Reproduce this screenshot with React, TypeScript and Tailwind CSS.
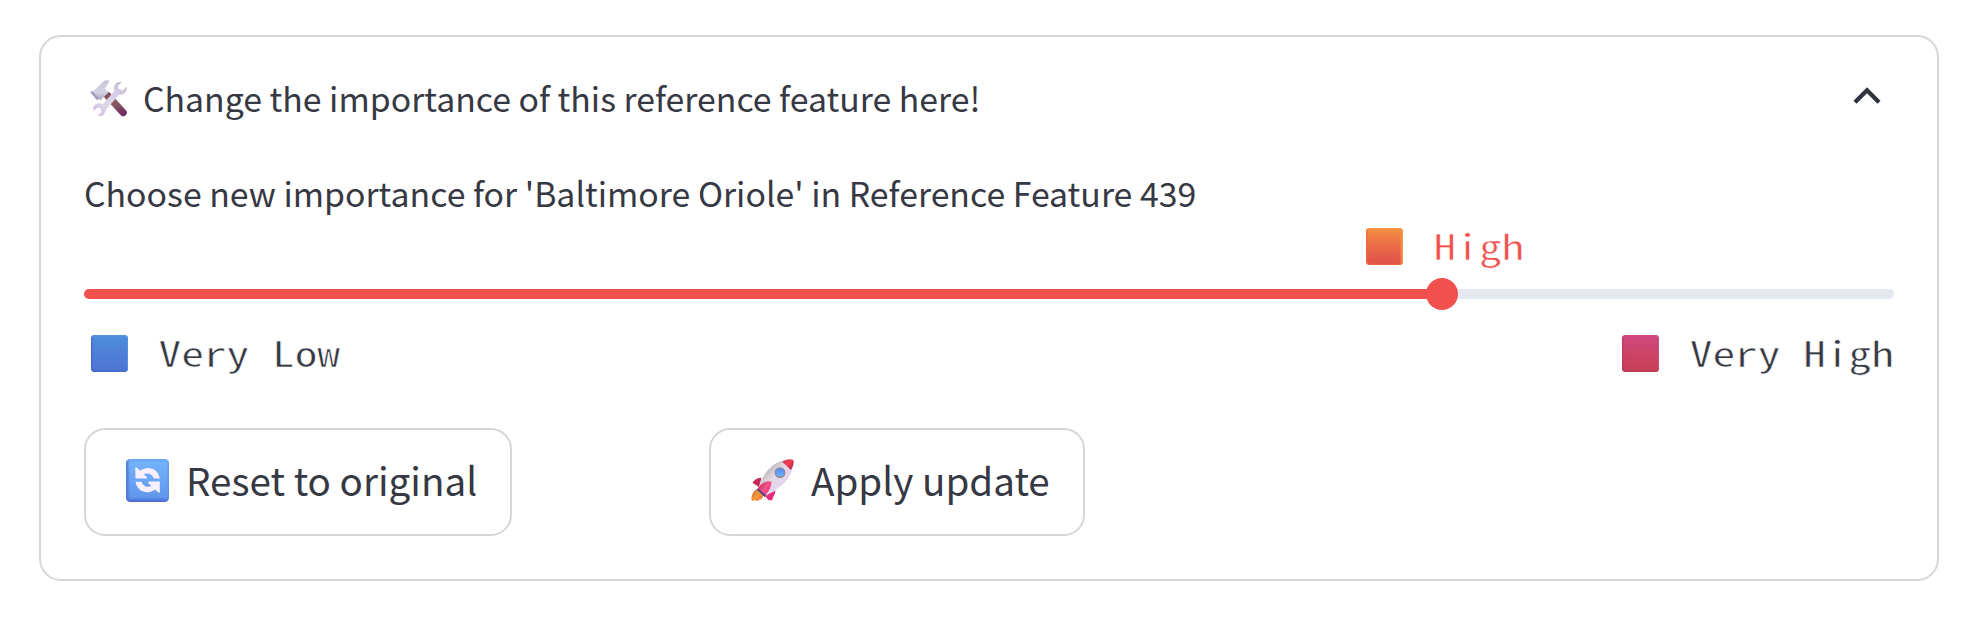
import type { ReactNode } from "react";

function ToolsIcon() {
  return (
    <svg className="h-[38px] w-[38px] shrink-0" viewBox="10 9 38 38" fill="none">
      <defs>
        <linearGradient id="handle" x1="26" y1="24" x2="42" y2="46" gradientUnits="userSpaceOnUse">
          <stop stopColor="#7d5055" />
          <stop offset="0.5" stopColor="#875a5c" />
          <stop offset="1" stopColor="#702a63" />
        </linearGradient>
        <linearGradient id="hammer" x1="20" y1="10" x2="22" y2="30" gradientUnits="userSpaceOnUse">
          <stop stopColor="#c9c6da" />
          <stop offset="0.6" stopColor="#d6d2e4" />
          <stop offset="1" stopColor="#aea6c6" />
        </linearGradient>
        <linearGradient id="wrench" x1="42" y1="12" x2="18" y2="46" gradientUnits="userSpaceOnUse">
          <stop stopColor="#bdb9c6" />
          <stop offset="0.3" stopColor="#d8ccea" />
          <stop offset="0.7" stopColor="#dcd8e4" />
          <stop offset="1" stopColor="#cdb4e6" />
        </linearGradient>
      </defs>
      <path d="M27.5 25.5L43.2 42.6" stroke="url(#handle)" strokeWidth="7.2" strokeLinecap="round" />
      <path d="M10.3 22.2L14.6 20.1L23.6 11.2Q24.6 10.2 26 10.2H29.6L28.2 13.4L24.9 18.8L28.5 22.5L20.3 30.6L17.8 28L17.2 30.3Z" fill="url(#hammer)" />
      <path d="M10.3 22.2L12.4 21.2L19.2 28.2L17.2 30.3Z" fill="#a49bbd" />
      <path d="M22.4 39.2L38.2 21.2" stroke="url(#wrench)" strokeWidth="6" />
      <path d="M41.8 12.3C37.4 10.9 33.3 14.4 34 19C34.3 23 38 25.5 41.8 24.5C45.4 23.6 47.3 20.4 46.7 16.9L42.7 20.4L38.2 18.8L38.1 15.5Z" fill="url(#wrench)" />
      <path d="M13.3 37.6C14.3 34.3 17.7 32.4 21 33.5C25.5 34.9 26.9 39.4 24.8 42.9C23.4 45.4 20.6 46.4 17.8 45.7L21.9 42L20.1 37.8L16.8 37.9L13.6 41.1Z" fill="url(#wrench)" />
    </svg>
  );
}

function RefreshIcon() {
  return (
    <svg className="h-[43px] w-[43px] shrink-0" viewBox="11 9 43 43" fill="none">
      <defs>
        <linearGradient id="tile" x1="32" y1="9" x2="32" y2="52" gradientUnits="userSpaceOnUse">
          <stop stopColor="#64a7f6" />
          <stop offset="0.1" stopColor="#73b1fb" />
          <stop offset="0.88" stopColor="#6298ec" />
          <stop offset="1" stopColor="#4965cf" />
        </linearGradient>
        <linearGradient id="tile-side" x1="11" y1="30" x2="54" y2="30" gradientUnits="userSpaceOnUse">
          <stop stopColor="#4766ca" stopOpacity="0.8" />
          <stop offset="0.1" stopColor="#4766ca" stopOpacity="0" />
          <stop offset="0.92" stopColor="#5ba8f6" stopOpacity="0" />
          <stop offset="1" stopColor="#4980e0" stopOpacity="0.5" />
        </linearGradient>
      </defs>
      <rect x="11" y="9" width="43" height="43" rx="4.5" fill="url(#tile)" />
      <rect x="11" y="9" width="43" height="43" rx="4.5" fill="url(#tile-side)" />
      <path d="M20.3 18.1Q20.5 16.8 21.7 17.6L25.1 20.7C33.2 14.7 43.2 18.8 44.8 28.4H38.8C37.2 23.7 32.8 22.4 28.8 24.2L32 27.2Q32.8 28.4 31.3 28.6H20.5Z" fill="#f8efff" />
      <path d="M44.8 42.1Q44.6 43.4 43.4 42.6L40.1 39.5C32 45.5 22.2 41.4 20.5 31.8H26.5C28.1 36.5 32.5 37.8 36.5 36L33.2 33Q32.5 31.8 34 31.6H44.8Z" fill="#f8efff" />
    </svg>
  );
}

function RocketIcon() {
  return (
    <svg className="h-[43px] w-[43px] shrink-0" viewBox="11.3 9.3 43 43" fill="none">
      <defs>
        <linearGradient id="hull" x1="27" y1="19" x2="43" y2="35" gradientUnits="userSpaceOnUse">
          <stop stopColor="#bdb5b9" />
          <stop offset="0.45" stopColor="#e2dae2" />
          <stop offset="1" stopColor="#e5d3f0" />
        </linearGradient>
        <linearGradient id="nose" x1="43" y1="10" x2="53" y2="18" gradientUnits="userSpaceOnUse">
          <stop stopColor="#d72f51" />
          <stop offset="0.55" stopColor="#f04052" />
          <stop offset="1" stopColor="#bb2848" />
        </linearGradient>
        <linearGradient id="fin" x1="18" y1="34" x2="32" y2="44" gradientUnits="userSpaceOnUse">
          <stop stopColor="#c52758" />
          <stop offset="0.5" stopColor="#f45588" />
          <stop offset="1" stopColor="#e9297b" />
        </linearGradient>
        <linearGradient id="flame" x1="13" y1="42" x2="22" y2="50" gradientUnits="userSpaceOnUse">
          <stop stopColor="#d6722d" />
          <stop offset="0.5" stopColor="#f49a40" />
          <stop offset="1" stopColor="#ed7931" />
        </linearGradient>
        <linearGradient id="porthole" x1="40" y1="19" x2="40" y2="28" gradientUnits="userSpaceOnUse">
          <stop stopColor="#4c8df2" />
          <stop offset="1" stopColor="#78b7ff" />
        </linearGradient>
      </defs>
      <path d="M18.2 39.4C14 40.6 11.5 45 11.8 50.5C12.9 51.3 14.5 51.1 15.7 50.2C16.6 51.7 18.3 51.4 19.2 50C21.6 50.3 22.7 48.4 24 45.5Z" fill="url(#flame)" />
      <path d="M21.8 28.2C18 27.5 15 30 12.7 33.1L17.5 36.1L19.2 38.1Z" fill="url(#fin)" />
      <path d="M35.8 40.7L29.5 43.7L25.2 46.6L28.8 50.2L32.3 50.9C32.9 47.4 35.6 44.4 35.8 40.7Z" fill="url(#fin)" />
      <path d="M19.5 37C23 24.5 31.5 12.8 46.5 9.8C51.8 8.6 54.4 10.5 53.6 14.9C51.8 28.5 42.2 38.2 28 44.3Z" fill="url(#hull)" />
      <path d="M42.5 12C46 10 50.6 8.7 53 10C55.2 11.7 53.5 17.1 51.2 20.2Z" fill="url(#nose)" />
      <path d="M16.8 39.8L19 38L26.8 44.9L25 47.3Z" fill="#4e427f" />
      <path d="M31.7 32C26.3 30.3 20.7 34.2 18.3 38.7L25.8 45C29.2 41.6 31.8 37 31.7 32Z" fill="url(#fin)" />
      <circle cx="40.3" cy="22.9" r="4.7" fill="url(#porthole)" stroke="#8b8598" strokeWidth="1.4" />
    </svg>
  );
}

function Swatch({ tone }: { tone: "blue" | "orange" | "red" }) {
  const tones = {
    blue: "bg-linear-to-b from-[#4f90dc] via-[#4e7fd6] to-[#4f74d4] shadow-[inset_1px_-1px_2px_#4664c2,inset_-1px_1px_1px_#5398e4]",
    orange: "bg-linear-to-b from-[#f48e42] via-[#ea6b47] to-[#df4e4a] shadow-[inset_1px_-1px_2px_#f06a38,inset_-2px_2px_2px_#f69a45]",
    red: "bg-linear-to-b from-[#cf4880] via-[#cb4468] to-[#c63e54] shadow-[inset_1px_-1px_2px_#b93956,inset_-1px_1px_1px_#d04e88]",
  };
  return <span className={`h-[37px] w-[37px] shrink-0 rounded-[4px] ${tones[tone]}`} />;
}

function Level({ tone, children }: { tone: "blue" | "orange" | "red"; children: ReactNode }) {
  return (
    <div className="flex h-[37px] items-center gap-[30.5px] font-['Noto_Sans_Mono_CJK_SC','Liberation_Mono',monospace] text-[45.4px] leading-[37px] whitespace-pre">
      <Swatch tone={tone} />
      <span className="block -translate-y-[1.5px] scale-y-[0.775] [-webkit-text-stroke:0.7px_white]">{children}</span>
    </div>
  );
}

function Button({ icon, children, className }: { icon: ReactNode; children: ReactNode; className: string }) {
  return (
    <button className={`flex h-[108px] items-center gap-[17px] rounded-[21px] border-2 border-[#d6d6d8] bg-white pb-[3px] pl-[40px] text-[38.6px] leading-[60px] whitespace-nowrap ${className}`}>
      {icon}
      <span className="-mt-[4px]">{children}</span>
    </button>
  );
}

export default function App() {
  return (
    <main className="h-[618px] bg-white pt-[35px] pl-[39px] font-['Noto_Sans_CJK_SC',sans-serif] text-[#363843]">
      <section className="flex h-[546px] w-[1900px] flex-col rounded-[22px] border-2 border-[#d6d6d8] pl-[43px]">
        <header className="flex h-[100px] w-[1810px] items-start pt-[41px] pl-[6px]">
          <div className="flex items-center gap-[15px]">
            <ToolsIcon />
            <h1 className="text-[33.8px] leading-[40px] whitespace-nowrap">Change the importance of this reference feature here!</h1>
          </div>
          <svg className="mt-[9px] mr-[13px] ml-auto h-[18px] w-[28px]" viewBox="0 0 28 18" fill="none">
            <path d="M2 15.2L14 3.2L26 15.2" stroke="#31333f" strokeWidth="4.3" />
          </svg>
        </header>
        <label className="mt-[36px] h-[55px] text-[33.82px] leading-[40px] whitespace-nowrap">
          Choose new importance for 'Baltimore Oriole' in Reference Feature 439
        </label>
        <div className="flex h-[50px] pl-[1282px] text-[#f0514f]">
          <Level tone="orange">High</Level>
        </div>
        <div className="flex h-[32px] w-[1810px] items-center">
          <div className="h-[10px] w-[1343px] rounded-l-full bg-[#f0514f]" />
          <div className="z-10 -mx-px h-[32px] w-[32px] shrink-0 rounded-full bg-[#f0514f]" />
          <div className="h-[10px] flex-1 rounded-r-full bg-[#e4e8f0]" />
        </div>
        <div className="mt-[25px] flex w-[1810px] justify-between pl-[7px]">
          <Level tone="blue">Very Low</Level>
          <Level tone="red">Very High</Level>
        </div>
        <div className="mt-[56px] flex gap-[197px]">
          <Button className="w-[428px]" icon={<RefreshIcon />}>Reset to original</Button>
          <Button className="w-[376px]" icon={<RocketIcon />}>Apply update</Button>
        </div>
      </section>
    </main>
  );
}
